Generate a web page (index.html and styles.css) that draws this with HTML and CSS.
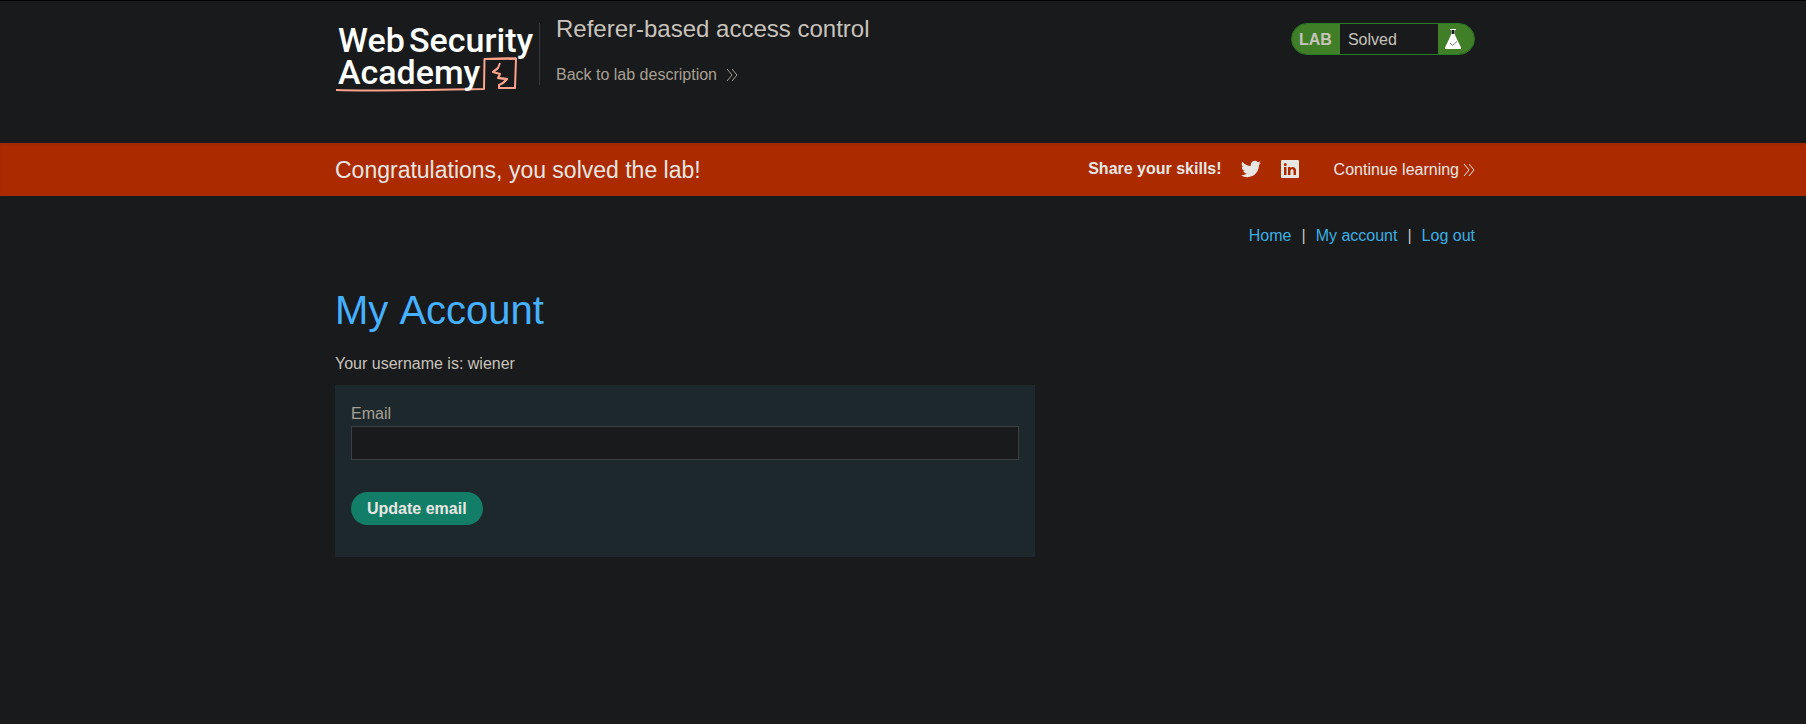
FILE: index.html
```html
<!DOCTYPE html>
<html lang="en">
<head>
<meta charset="utf-8">
<meta name="viewport" content="width=device-width, initial-scale=1">
<title>Referer-based access control</title>
<link rel="stylesheet" href="styles.css">
</head>
<body>
<header class="lab-header">
  <div class="container header-row">
    <a class="logo" href="#" aria-label="Web Security Academy">
      <svg width="204" height="76" viewBox="0 0 204 76">
        <g fill="none" stroke="#ffa28c" stroke-width="2" stroke-linejoin="round">
          <path d="M1 70 C40 71.500 110 69.500 149 69 L149.500 39 L181 38.500 L180 68 L164 68 L164 65 L168 63 L172 59 L163 58 L165 54 L158 52 L163 48 L165 43"/>
          <path d="M149 39l32-.5M163 58l9 1-4 4M158 52l5-4"/>
        </g>
        <g class="logo-text"><text x="3" y="32">Web</text><text x="74" y="32">Security</text><text x="3" y="64">Academy</text></g>
      </svg>
    </a>
    <div class="divider"></div>
    <div class="title-block">
      <h2>Referer-based access control</h2>
      <a class="back" href="#">Back to lab description
        <svg class="chevrons" width="12" height="12" viewBox="0 0 12 12"><path d="M1 0l5 6-5 6M6 0l5 6-5 6"/></svg>
      </a>
    </div>
    <div class="status">
      <span class="status-lab">LAB</span>
      <span class="status-text">Solved</span>
      <span class="status-icon">
        <svg width="16" height="20" viewBox="0 0 16 20"><path d="M5 0h6v1h-1v5l6 12.500V20H0v-1.500L6 6V1H5z" fill="#fff"/><path d="M6.500 1h3v4h-3z" fill="#181a1b"/><path d="M5 14l2.500 2.500L12 12.500" fill="none" stroke="#777"/></svg>
      </span>
    </div>
  </div>
</header>
<section class="banner">
  <div class="container banner-row">
    <h4>Congratulations, you solved the lab!</h4>
    <div class="share">
      <strong>Share your skills!</strong>
      <a href="#" aria-label="Twitter"><svg width="20" height="20" viewBox="0 0 24 24"><path fill="currentColor" d="M23.950 4.570a10 10 0 0 1-2.820.770 4.960 4.960 0 0 0 2.160-2.720c-.95.550-2 .960-3.130 1.180a4.920 4.920 0 0 0-8.380 4.480C7.690 8.090 4.070 6.130 1.640 3.160a4.900 4.900 0 0 0 1.520 6.570 4.900 4.900 0 0 1-2.230-.61v.06a4.920 4.920 0 0 0 3.950 4.830 5 5 0 0 1-2.210.080 4.940 4.940 0 0 0 4.600 3.420A9.870 9.870 0 0 1 0 19.540a13.990 13.990 0 0 0 7.550 2.210c9.050 0 14-7.500 14-13.980 0-.21 0-.42-.02-.63a9.940 9.940 0 0 0 2.420-2.570z"/></svg></a>
      <a href="#" aria-label="LinkedIn"><svg width="20" height="20" viewBox="0 0 20 20"><path fill="currentColor" fill-rule="evenodd" d="M2 1h16a1 1 0 0 1 1 1v16a1 1 0 0 1-1 1H2a1 1 0 0 1-1-1V2a1 1 0 0 1 1-1zM4 8v8h2.500V8zm1.250-4a1.500 1.500 0 1 0 0 3 1.500 1.500 0 0 0 0-3zM8 8v8h2.500v-4c0-2.500 3-2.500 3 0v4H16v-4.500c0-4-4-4.500-5.500-2.400V8z"/></svg></a>
    </div>
    <a class="continue" href="#">Continue learning
      <svg class="chevrons" width="12" height="12" viewBox="0 0 12 12"><path d="M1 0l5 6-5 6M6 0l5 6-5 6"/></svg>
    </a>
  </div>
</section>
<main class="container">
  <nav class="links"><a href="#">Home</a><span>|</span><a href="#">My account</a><span>|</span><a href="#">Log out</a></nav>
  <h1>My Account</h1>
  <p class="username">Your username is: wiener</p>
  <form class="email-form">
    <label for="email">Email</label>
    <input id="email" type="email">
    <button type="submit">Update email</button>
  </form>
</main>
</body>
</html>
```
FILE: styles.css
```css
* { box-sizing: border-box; }
body {
  margin: 0;
  background: #181a1b;
  color: #c8c3bc;
  font: 16px/20px "Liberation Sans", Arial, sans-serif;
}
a { color: inherit; text-decoration: none; }
h1, h2, h4, p { margin: 0; font-weight: 400; }
svg { display: block; }
.container { width: 100%; max-width: 1144px; margin: 0 auto; padding-left: 4px; }
.lab-header { border-top: 1px solid #000; padding-bottom: 47px; }
.header-row { display: flex; align-items: flex-start; }
.logo { margin-top: 19px; }
.logo-text { fill: #fff; font: 500 34px Roboto, sans-serif; }
.divider { width: 1px; height: 62px; margin: 22px 16px 0 0; background: #35393b; }
.title-block { flex: 1; padding-top: 13px; }
.title-block h2 { font-size: 24px; line-height: 30px; }
.back { display: inline-flex; gap: 9px; align-items: center; margin-top: 21px; color: #a8a095; }
.chevrons { fill: none; stroke: currentColor; stroke-width: 1; }
.status {
  display: flex;
  margin-top: 22px;
  height: 32px;
  width: 184px;
  border: 1px solid #267f24;
  border-radius: 16px;
  overflow: hidden;
  line-height: 32px;
}
.status-lab { background: #407f28; padding: 0 8px 0 7px; font-weight: 700; }
.status-text { flex: 1; padding-left: 8px; }
.status-icon { background: #407f28; width: 36px; padding: 5px 0 0 7px; }
.banner { background: #ab2a00; color: #e8e6e3; box-shadow: inset 0 3px 1px #a12800; }
.banner-row { display: flex; align-items: center; min-height: 53px; }
.banner h4 { flex: 1; font-size: 23px; line-height: 30px; }
.share { display: flex; align-items: center; gap: 19px; margin-right: 34px; padding-bottom: 1px; }
.continue { display: flex; align-items: center; gap: 4px; }
.links { display: flex; justify-content: flex-end; gap: 10px; padding-top: 30px; }
.links a { color: #3cafe3; }
h1 { color: #45b1ff; font-size: 40px; line-height: 50px; margin-top: 39px; font-kerning: none; }
.username { margin-top: 19px; }
.email-form {
  width: 100%;
  max-width: 700px;
  margin-top: 11px;
  padding: 19px 16px 32px;
  background: #1d282c;
}
.email-form label { display: block; color: #a8a095; }
.email-form input {
  display: block;
  width: 100%;
  height: 34px;
  margin-top: 2px;
  padding: 0 8px;
  border: 1px solid #3b4042;
  background: #181a1b;
  color: #e8e6e3;
  font: inherit;
}
.email-form button {
  display: block;
  margin-top: 32px;
  padding: 7px 16px 6px;
  border: 0;
  border-radius: 20px;
  background: #137e67;
  color: #e8e6e3;
  font: inherit;
  font-weight: 700;
}
```
